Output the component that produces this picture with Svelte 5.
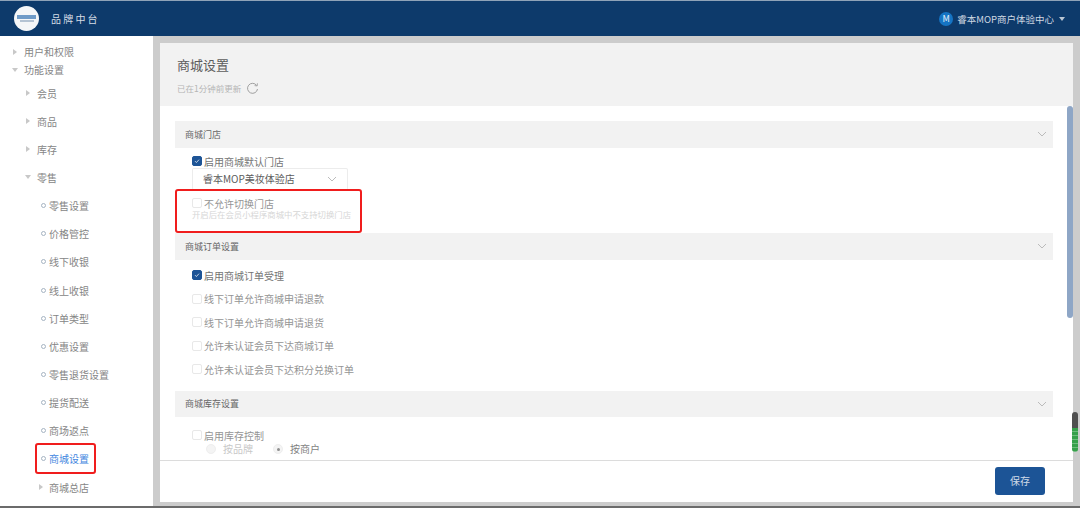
<script>
  const top = [
    { label: '用户和权限', arrow: 'right' },
    { label: '功能设置', arrow: 'down' }
  ];
  const groups = [
    { label: '会员', arrow: 'right' },
    { label: '商品', arrow: 'right' },
    { label: '库存', arrow: 'right' },
    { label: '零售', arrow: 'down' }
  ];
  const leaves = [
    { label: '零售设置' }, { label: '价格管控' }, { label: '线下收银' }, { label: '线上收银' },
    { label: '订单类型' }, { label: '优惠设置' }, { label: '零售退货设置' }, { label: '提货配送' },
    { label: '商场返点' }, { label: '商城设置', active: true }, { label: '商城总店', arrow: true }
  ];
  const orderRows = [
    { label: '启用商城订单受理', on: true },
    { label: '线下订单允许商城申请退款' },
    { label: '线下订单允许商城申请退货' },
    { label: '允许未认证会员下达商城订单' },
    { label: '允许未认证会员下达积分兑换订单' }
  ];
</script>

{#snippet chevron()}
  <svg class="chev" width="10" height="6" viewBox="0 0 10 6"><path d="M1 1l4 4 4-4" fill="none" stroke="#b4b4b4" stroke-width="0.9" /></svg>
{/snippet}

{#snippet check(on)}
  <span class="box" class:on>
    {#if on}<svg width="12" height="12" viewBox="0 0 12 12"><path d="M3 6.2l2.1 2.1L9 4" fill="none" stroke="#fff" stroke-width="1.1" /></svg>{/if}
  </span>
{/snippet}

<div class="page">
  <header class="bar">
    <div class="brand">
      <div class="logo"><span class="logo-a"></span><span class="logo-b"></span></div>
      <span class="brand-name">品牌中台</span>
    </div>
    <div class="account">
      <span class="avatar">M</span>
      <span class="account-name">睿本MOP商户体验中心</span>
      <span class="caret"></span>
    </div>
  </header>

  <div class="body">
    <nav class="side">
      {#each top as item}
        <div class="top-item"><span class="tri {item.arrow}"></span>{item.label}</div>
      {/each}
      <div class="group-list">
        {#each groups as item}
          <div class="group-item"><span class="tri {item.arrow}"></span>{item.label}</div>
        {/each}
        {#each leaves as item}
          <div class="leaf" class:active={item.active}>
            {#if item.arrow}<span class="tri right"></span>{:else}<span class="dot"></span>{/if}
            {item.label}
          </div>
        {/each}
      </div>
    </nav>

    <main class="panel">
      <div class="head">
        <h1>商城设置</h1>
        <div class="updated">
          已在1分钟前更新
          <svg width="13" height="13" viewBox="0 0 13 13"><path d="M10.6 3.4A5 5 0 1 0 11.5 7" fill="none" stroke="#a0a0a0" stroke-width="1" /><path d="M8.6 3.6l2.6.3.2-2.6" fill="none" stroke="#a0a0a0" stroke-width="0.9" /></svg>
        </div>
      </div>

      <div class="scroll">
        <section>
          <div class="sec-head"><span>商城门店</span>{@render chevron()}</div>
          <div class="sec-body store">
            <div class="row tight">{@render check(true)}启用商城默认门店</div>
            <div class="select"><span>睿本MOP美妆体验店</span>{@render chevron()}</div>
            <div class="row tight off switch">{@render check(false)}不允许切换门店</div>
            <div class="hint">开启后在会员小程序商城中不支持切换门店</div>
          </div>
        </section>

        <section>
          <div class="sec-head"><span>商城订单设置</span>{@render chevron()}</div>
          <div class="sec-body list">
            {#each orderRows as r}
              <div class="row" class:off={!r.on}>{@render check(!!r.on)}{r.label}</div>
            {/each}
          </div>
        </section>

        <section class="stock">
          <div class="sec-head"><span>商城库存设置</span>{@render chevron()}</div>
          <div class="sec-body inv">
            <div class="row tight off">{@render check(false)}启用库存控制</div>
            <div class="radios">
              <span class="radio"><i></i><em class="dim">按品牌</em></span>
              <span class="radio"><i class="sel"></i><em>按商户</em></span>
            </div>
          </div>
        </section>

        <div class="thumb"></div>
      </div>

      <footer class="foot"><button>保存</button></footer>
    </main>

    <div class="gutter"><div class="meter"></div></div>
  </div>

  <div class="mark mark-store"></div>
  <div class="mark mark-nav"></div>
</div>

<style>
  :global(body) { margin: 0; background: #ccc; }
  .page {
    position: relative;
    width: 1080px;
    height: 508px;
    overflow: hidden;
    display: flex;
    flex-direction: column;
    font-family: "Noto Sans CJK SC", "Noto Sans", sans-serif;
    color: #777;
    background: #cccccc;
    border-bottom: 2px solid #6b6b6b;
    box-sizing: border-box;
  }
  .bar {
    height: 36px;
    flex: none;
    box-sizing: border-box;
    border-top: 1px solid #8fa3b8;
    background: #0d3a6b;
    display: flex;
    align-items: center;
    justify-content: space-between;
    padding: 0 15px 0 14px;
  }
  .brand { display: flex; align-items: center; gap: 12px; }
  .logo {
    width: 25px; height: 25px; border-radius: 50%;
    background: #f4f6f8;
    display: flex; flex-direction: column; align-items: center; justify-content: center; gap: 1px;
  }
  .logo-a { width: 19px; height: 4px; background: #6f9bc8; }
  .logo-b { width: 14px; height: 1.5px; background: #b4c3d3; }
  .brand-name { font-size: 10px; letter-spacing: 2.2px; color: #d5dde6; }
  .account { display: flex; align-items: center; color: #cfd8e2; font-size: 9.5px; }
  .avatar {
    width: 14px; height: 14px; border-radius: 50%;
    background: #1574c4; color: #e8f2fb;
    font-size: 9px; line-height: 14px; text-align: center;
    margin-right: 4px;
  }
  .account-name { margin-right: 5px; }
  .caret { border: 3.5px solid transparent; border-top: 4px solid #b9c6d4; border-bottom: 0; width: 0; height: 0; }

  .body { flex: 1; min-height: 0; display: flex; }
  .side {
    width: 153px; flex: none; background: #fff;
    padding-top: 7px; box-sizing: border-box;
    font-size: 10px; color: #858585;
  }
  .top-item {
    height: 18px; line-height: 18px;
    display: flex; align-items: center;
    padding-left: 13px;
  }
  .tri { width: 0; height: 0; flex: none; }
  .tri.right { border-left: 4px solid #c8c8c8; border-top: 3px solid transparent; border-bottom: 3px solid transparent; margin-right: 7px; }
  .tri.down { border-top: 4px solid #c8c8c8; border-left: 3px solid transparent; border-right: 3px solid transparent; margin-right: 6px; margin-left: -1px; }
  .group-item {
    height: 28.15px; display: flex; align-items: center; padding-left: 26px;
  }
  .leaf {
    height: 28.15px; display: flex; align-items: center; padding-left: 41px; gap: 3px;
  }
  .leaf .tri.right { margin: 0 3px 0 -2px; }
  .leaf.active { color: #3f86e0; }
  .dot {
    width: 3px; height: 3px; border-radius: 50%;
    border: 1px solid #a5b3c2; background: #fff; flex: none;
  }

  .gutter { width: 7px; flex: none; position: relative; }
  .meter {
    position: absolute; left: -1px; top: 376px; width: 6px; height: 40px; border-radius: 3px;
    background:
      linear-gradient(#4f4f4f 0 40%, transparent 40% 100%),
      repeating-linear-gradient(#36a04a 0 3px, #6dbd7c 3px 4px);
  }

  .panel {
    width: 913px; margin: 7px 0 4px 7px; flex: none;
    background: #fff; display: flex; flex-direction: column; min-height: 0;
  }
  .head {
    height: 63px; flex: none; box-sizing: border-box;
    background: #f2f2f2; padding: 12px 0 0 17px;
  }
  h1 { margin: 0; font-size: 13px; line-height: 20px; font-weight: 400; color: #5c5c5c; }
  .updated {
    margin-top: 7px; display: flex; align-items: center; gap: 5px;
    font-size: 8.5px; line-height: 13px; color: #b5b5b5;
  }

  .scroll {
    position: relative; flex: 1; min-height: 0; overflow: hidden;
    padding: 15px 20px 0 15px;
    border-bottom: 1px solid #dcdcdc;
  }
  .scroll::after {
    content: ""; position: absolute; left: 15px; right: 20px; bottom: 0; height: 1px; background: #fff;
  }
  .thumb {
    position: absolute; right: 0; top: 0; width: 6px; height: 212px; border-radius: 3px;
    background: #8ea6c6;
  }
  .sec-head {
    height: 26.5px; background: #f2f2f2; display: flex; align-items: center; justify-content: space-between;
    padding: 0 6px 0 10px; font-size: 9px; color: #666;
  }
  .stock { margin-top: 9.5px; }
  .sec-body { padding-left: 17px; }
  .store { padding-top: 7px; height: 85.5px; box-sizing: border-box; }
  .list { padding-top: 4px; }
  .inv { padding-top: 11.5px; }
  .row {
    display: flex; align-items: center; gap: 1px;
    height: 23.5px; font-size: 10px; color: #747474;
  }
  .row.tight { height: 13px; line-height: 13px; }
  .row.switch { height: 11px; line-height: 11px; }
  .row.off { color: #949494; }
  .box {
    width: 10px; height: 10px; box-sizing: border-box; border-radius: 2px; margin-right: 1px;
    border: 1px solid #e8e8e8; background: #fff; flex: none; display: flex; align-items: center; justify-content: center;
  }
  .box.on { background: #1d5496; border-color: #1d5496; }
  .select {
    width: 156px; height: 22px; box-sizing: border-box;
    border: 1px solid #ececec; border-radius: 2px; border-bottom-color: transparent;
    display: flex; align-items: center; justify-content: space-between;
    padding: 0 10px 0 10px; font-size: 10px; color: #5c5c5c;
    background: #fff; margin-bottom: 8px;
  }
  .hint { font-size: 8.4px; line-height: 11px; color: #d6d6d6; white-space: nowrap; }
  .radios { display: flex; gap: 20px; padding-left: 14px; margin-top: 0.5px; font-size: 10px; line-height: 14px; }
  .radio { display: flex; align-items: center; gap: 7px; }
  .radio em { font-style: normal; color: #7f7f7f; }
  .radio em.dim { color: #c8c8c8; }
  .radio i {
    width: 10px; height: 10px; border-radius: 50%; background: #f4f4f4; border: 1px solid #eee; box-sizing: border-box;
    display: flex; align-items: center; justify-content: center;
  }
  .radio i.sel::after { content: ""; width: 3px; height: 3px; border-radius: 50%; background: #8f8f8f; }

  .foot {
    height: 41px; flex: none; box-sizing: border-box; background: #fff;
    display: flex; justify-content: flex-end; align-items: center; padding: 0 28px 2px 0;
  }
  button {
    width: 50px; height: 28px; border: 0; border-radius: 3px; background: #1c5496;
    color: #cfdbe8; font: 10px "Noto Sans CJK SC", sans-serif;
  }

  .mark { position: absolute; border: 2px solid #f01d1d; border-radius: 3px; box-sizing: border-box; pointer-events: none; }
  .mark-store { left: 175px; top: 189px; width: 187px; height: 44px; }
  .mark-nav { left: 35px; top: 443px; width: 61px; height: 31px; }
</style>
